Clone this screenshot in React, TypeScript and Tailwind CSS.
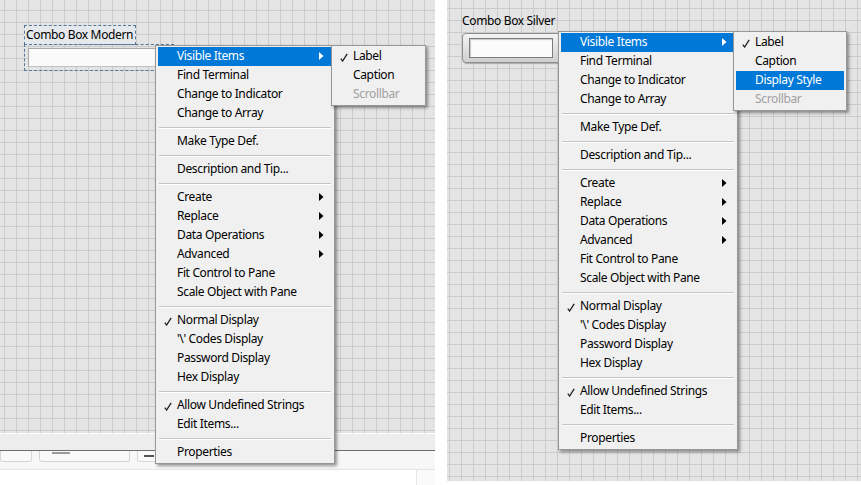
import React from "react";

type Item =
  | { sep: true }
  | { label: string; check?: boolean; arrow?: boolean; hi?: boolean; disabled?: boolean; sep?: false };

const SEP: Item = { sep: true };

const mainItems: Item[] = [
  { label: "Visible Items", arrow: true, hi: true },
  { label: "Find Terminal" },
  { label: "Change to Indicator" },
  { label: "Change to Array" },
  SEP,
  { label: "Make Type Def." },
  SEP,
  { label: "Description and Tip..." },
  SEP,
  { label: "Create", arrow: true },
  { label: "Replace", arrow: true },
  { label: "Data Operations", arrow: true },
  { label: "Advanced", arrow: true },
  { label: "Fit Control to Pane" },
  { label: "Scale Object with Pane" },
  SEP,
  { label: "Normal Display", check: true },
  { label: "'\\' Codes Display" },
  { label: "Password Display" },
  { label: "Hex Display" },
  SEP,
  { label: "Allow Undefined Strings", check: true },
  { label: "Edit Items..." },
  SEP,
  { label: "Properties" },
];

const subLeft: Item[] = [
  { label: "Label", check: true },
  { label: "Caption" },
  { label: "Scrollbar", disabled: true },
];

const subRight: Item[] = [
  { label: "Label", check: true },
  { label: "Caption" },
  { label: "Display Style", hi: true },
  { label: "Scrollbar", disabled: true },
];

function Check() {
  return (
    <svg width="8" height="9" viewBox="0 0 8 9" className="absolute left-[6px] top-[6px]">
      <path d="M0.8 5.6 L2.6 8 L7.2 0.8" fill="none" stroke="#1a1a1a" strokeWidth="1.25" />
    </svg>
  );
}

function Arrow({ white }: { white?: boolean }) {
  return (
    <svg width="5" height="8" viewBox="0 0 5 8" className="absolute right-[8px] top-[5px]">
      <polygon points="0,0 4.5,4 0,8" fill={white ? "#ffffff" : "#000000"} />
    </svg>
  );
}

function Menu({ items, className }: { items: Item[]; className: string }) {
  return (
    <div
      className={
        "absolute bg-[#f0f0f0] border border-[#979797] px-[2px] py-[1px] shadow-[2px_2px_3px_rgba(0,0,0,0.4)] " +
        className
      }
    >
      {items.map((it, i) =>
        it.sep ? (
          <div key={i} className="h-[9px] flex flex-col justify-center px-[1px]">
            <div className="h-px bg-[#c5c5c5]" />
            <div className="h-px bg-[#ffffff]" />
          </div>
        ) : (
          <div
            key={i}
            className={
              "relative h-[19px] leading-[18px] whitespace-nowrap pl-[19px] " +
              (it.hi ? "bg-[#0078d7] text-white" : it.disabled ? "text-[#a0a0a0]" : "text-[#000000]")
            }
          >
            {it.check && <Check />}
            {it.label}
            {it.arrow && <Arrow white={it.hi} />}
          </div>
        )
      )}
    </div>
  );
}

const gridBg =
  "bg-[#e4e4e4] bg-[linear-gradient(to_right,#cbcbcb_1px,transparent_1px),linear-gradient(to_bottom,#cbcbcb_1px,transparent_1px)] bg-[size:12px_12px]";

export default function App() {
  return (
    <div className="w-[861px] h-[485px] flex bg-white overflow-hidden font-['Noto_Sans',sans-serif] text-[12px] tracking-[-0.35px] text-black">
      {/* Left panel */}
      <div className="relative w-[435px] h-[485px] flex flex-col">
        <div className={"relative h-[433px] " + gridBg + " bg-[position:4px_10px]"}>
          {/* label */}
          <div className="absolute left-[24px] top-[25px] w-[112px] h-[20px] border border-dashed border-[#55779a] bg-[#e6e9ec] pl-[1px] leading-[18px] whitespace-nowrap">
            Combo Box Modern
          </div>
          {/* control */}
          <div className="absolute left-[24px] top-[44px] w-[150px] h-[27px] border border-dashed border-[#55779a] p-[3px]">
            <div className="h-full bg-[#fafafa] border border-[#c2c2c2] border-t-[#a9a9a9] border-l-[#a9a9a9]" />
          </div>
        </div>
        <div className="h-[18px] bg-[#ededed] border-t border-white border-b border-b-[#6e6e6e]" />
        <div className="h-[19px] bg-[#f7f7f7] flex gap-[7px] items-start border-b border-[#e4e4e4]">
          <div className="w-[32px] h-[11px] border border-t-0 border-[#d6d6d6] rounded-b-[3px] bg-[#f9f9f9]" />
          <div className="w-[91px] h-[11px] border border-t-0 border-[#d6d6d6] rounded-b-[3px] bg-[#f9f9f9] pl-[12px]">
            <div className="w-[18px] h-[2px] mt-[1px] bg-[#9a9a9a]" />
          </div>
          <div className="w-[60px] h-[11px] border border-t-0 border-[#d6d6d6] rounded-b-[3px] bg-[#f9f9f9] pl-[6px]">
            <div className="w-[10px] h-[2px] mt-[4px] bg-[#555]" />
          </div>
        </div>
        <div className="flex-1 flex">
          <div className="w-[417px] bg-white border-r border-[#e6e6e6]" />
          <div className="flex-1 bg-[#fafafa]" />
        </div>

        <Menu items={mainItems} className="left-[155px] top-[45px] w-[180px] z-10" />
        <Menu items={subLeft} className="left-[331px] top-[45px] w-[95px] z-20" />
      </div>

      <div className="w-[12px]" />

      {/* Right panel */}
      <div className="relative flex-1 h-[485px] flex flex-col">
        <div className={"relative h-[481px] " + gridBg + " bg-[position:2px_8px]"}>
          <div className="absolute left-[15px] top-[13px] leading-[16px] whitespace-nowrap">Combo Box Silver</div>
          <div className="absolute left-[15px] top-[33px] w-[110px] h-[30px] rounded-[4px] border border-[#8e8e8e] bg-[linear-gradient(to_bottom,#f4f4f4,#cfcfcf)] shadow-[1px_1px_1px_rgba(0,0,0,0.25)] px-[6px] py-[4px]">
            <div className="w-[84px] h-full bg-[#fbfbfb] border border-[#7c7c7c] shadow-[inset_1px_1px_1px_rgba(0,0,0,0.2)]" />
          </div>
        </div>
        <div className="flex-1 bg-white" />

        <Menu items={mainItems} className="left-[111px] top-[31px] w-[180px] z-10" />
        <Menu items={subRight} className="left-[286px] top-[31px] w-[114px] z-20" />
      </div>
    </div>
  );
}
